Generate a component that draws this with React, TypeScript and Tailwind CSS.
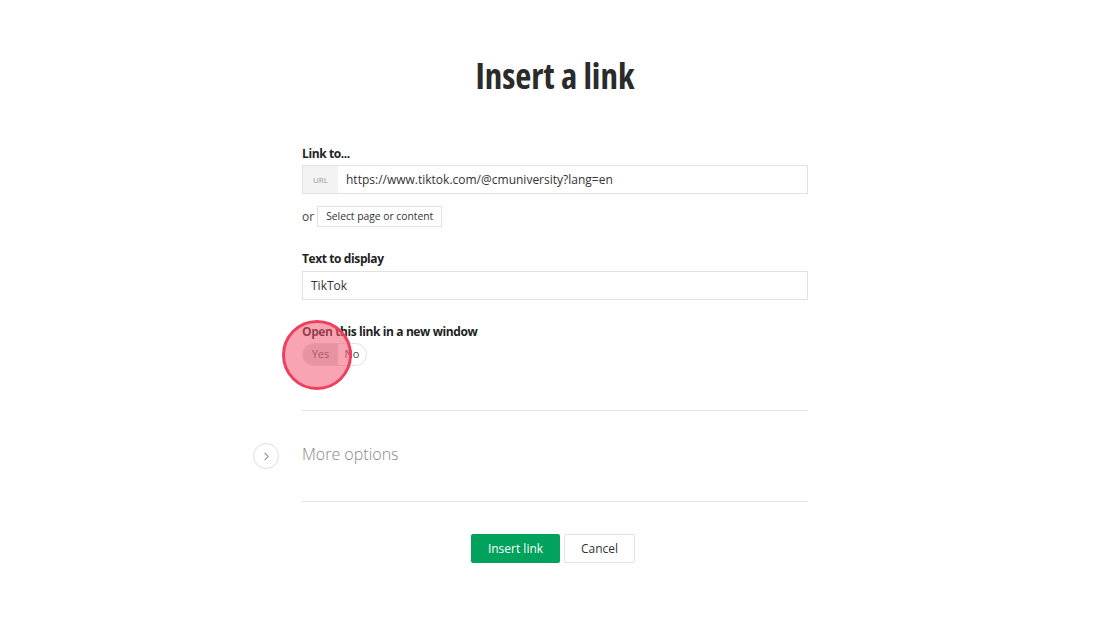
import React from 'react';
import { ChevronRight } from 'lucide-react';

const App: React.FC = () => {
  return (
    <div className="min-h-[625px] w-[1110px] bg-white font-['Open_Sans',sans-serif] text-[#333]">
      <div className="flex flex-col items-center pt-[52px]">
        <h1 className="text-[35px] font-bold leading-[48px] text-[#2b2b2b] [font-stretch:75%]">Insert a link</h1>

        <div className="mt-[45px] w-[506px]">
          <label className="block text-[12px] font-bold leading-[18px] tracking-[-0.4px] text-[#222]">Link to...</label>
          <div className="mt-[2px] flex h-[29px] border border-[#e2e2e2]">
            <span className="flex w-[35px] items-center justify-center bg-[#f3f3f3] text-[8px] text-[#999]">URL</span>
            <span className="flex items-center pl-[8px] text-[12px] text-[#333]">https://www.tiktok.com/@cmuniversity?lang=en</span>
          </div>
          <div className="mt-[12px] flex items-center gap-[3px]">
            <span className="text-[12px] text-[#444]">or</span>
            <button className="h-[21px] border border-[#e2e2e2] bg-white px-[8px] text-[10.3px] text-[#333]">Select page or content</button>
          </div>

          <label className="mt-[23px] block text-[12px] font-bold leading-[18px] tracking-[-0.4px] text-[#222]">Text to display</label>
          <div className="mt-[3px] flex h-[29px] items-center border border-[#e2e2e2] pl-[8px] text-[12px] text-[#333]">TikTok</div>

          <label className="mt-[23px] block text-[12px] font-bold leading-[18px] tracking-[-0.4px] text-[#222]">Open this link in a new window</label>
          <div className="relative mt-[2px] flex h-[23px] w-[65px]">
            <div className="flex h-full w-full overflow-hidden rounded-full border border-[#e2e2e2] text-[11px]">
              <span className="flex w-[35px] items-center justify-center bg-[#d9d9d9] text-[#555]">Yes</span>
              <span className="flex flex-1 items-center justify-center text-[#444]">No</span>
            </div>
            <div className="absolute left-[-20px] top-[-23px] h-[70px] w-[70px] rounded-full border-[3px] border-[#ee3f5d] bg-[#f25a74]/55"></div>
          </div>

          <div className="mt-[44px] border-t border-[#e5e5e5]"></div>
          <div className="relative flex h-[90px] items-center">
            <div className="absolute left-[-49px] top-[32px] flex h-[26px] w-[26px] items-center justify-center rounded-full border border-[#dcdcdc] text-[#555]">
              <ChevronRight size={13} strokeWidth={1.8} />
            </div>
            <span className="mb-[4px] text-[16px] font-light text-[#888]">More options</span>
          </div>
          <div className="border-t border-[#e5e5e5]"></div>

          <div className="mt-[32px] flex justify-center gap-[4px] pr-[4px]">
            <button className="h-[29px] w-[89px] rounded-[2px] bg-[#00a25c] text-[12px] text-white">Insert link</button>
            <button className="h-[29px] w-[71px] rounded-[2px] border border-[#e2e2e2] bg-white text-[12px] text-[#333]">Cancel</button>
          </div>
        </div>
      </div>
    </div>
  );
};

export default App;
